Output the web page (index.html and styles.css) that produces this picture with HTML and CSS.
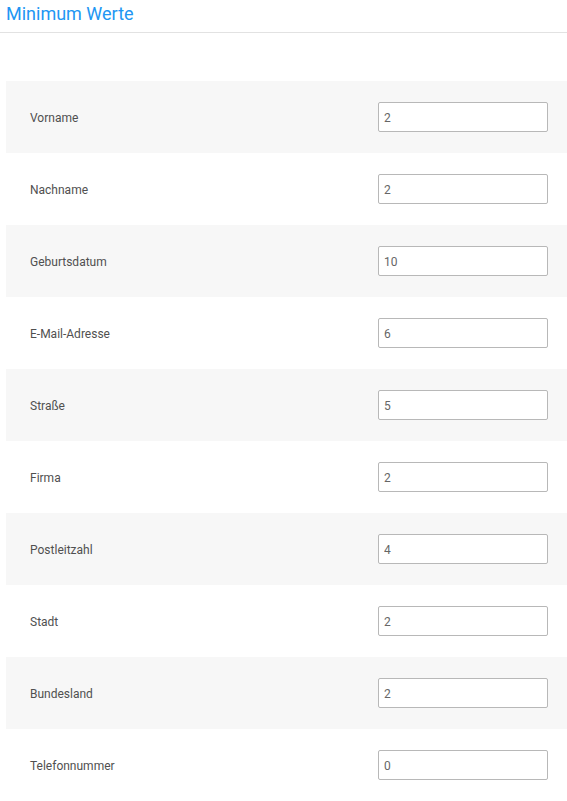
FILE: index.html
```html
<!DOCTYPE html>
<html lang="de">
<head>
<meta charset="utf-8">
<title>Minimum Werte</title>
<link rel="stylesheet" href="styles.css">
</head>
<body>
<header class="head">
  <h1 class="title">Minimum Werte</h1>
</header>
<main class="list">
  <div class="row alt"><label class="label">Vorname</label><input class="field" type="text" value="2"></div>
  <div class="row"><label class="label">Nachname</label><input class="field" type="text" value="2"></div>
  <div class="row alt"><label class="label">Geburtsdatum</label><input class="field" type="text" value="10"></div>
  <div class="row"><label class="label">E-Mail-Adresse</label><input class="field" type="text" value="6"></div>
  <div class="row alt"><label class="label">Straße</label><input class="field" type="text" value="5"></div>
  <div class="row"><label class="label">Firma</label><input class="field" type="text" value="2"></div>
  <div class="row alt"><label class="label">Postleitzahl</label><input class="field" type="text" value="4"></div>
  <div class="row"><label class="label">Stadt</label><input class="field" type="text" value="2"></div>
  <div class="row alt"><label class="label">Bundesland</label><input class="field" type="text" value="2"></div>
  <div class="row"><label class="label">Telefonnummer</label><input class="field" type="text" value="0"></div>
</main>
</body>
</html>
```
FILE: styles.css
```css
html, body {
  margin: 0;
  padding: 0;
  background: #ffffff;
  font-family: Roboto, "Noto Sans", sans-serif;
}
.head {
  height: 32px;
  border-bottom: 1px solid #e2e2e2;
  padding: 0 6px;
  box-sizing: content-box;
}
.title {
  margin: 0;
  font-size: 18px;
  font-weight: 400;
  line-height: 28px;
  color: #2196f3;
}
.list {
  margin-top: 48px;
  margin-left: 6px;
}
.row {
  height: 72px;
  display: flex;
  align-items: center;
  justify-content: space-between;
  padding: 0 19px 0 24px;
  box-sizing: border-box;
}
.row.alt {
  background: #f7f7f7;
}
.label {
  font-size: 12px;
  color: #505050;
  padding-top: 2px;
}
.field {
  width: 170px;
  height: 30px;
  box-sizing: border-box;
  border: 1px solid #b8b8b8;
  border-radius: 2px;
  background: #fff;
  padding: 1px 5px 0;
  font-family: Roboto, "Noto Sans", sans-serif;
  font-size: 12px;
  color: #666;
  outline: none;
}
```
